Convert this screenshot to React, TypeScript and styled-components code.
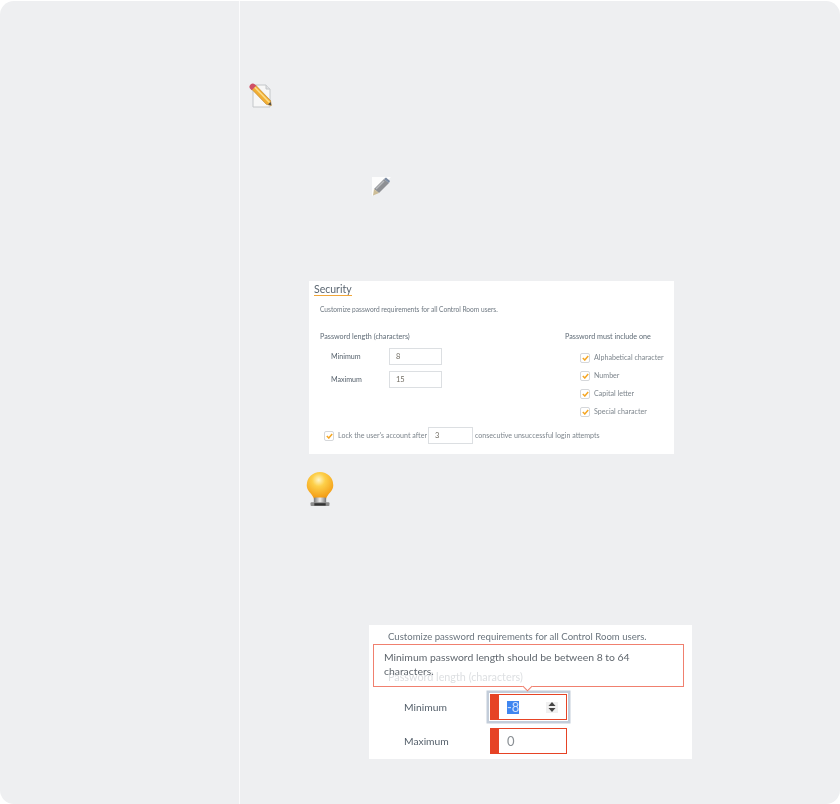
import React from "react";
import styled, { createGlobalStyle } from "styled-components";

const Global = createGlobalStyle`
  html, body { margin: 0; padding: 0; background: #fff; }
  body { font-family: Lato, "Liberation Sans", sans-serif; }
  #root { width: 840px; height: 804px; overflow: hidden; }
`;

const Panel = styled.div`
  width: 840px; height: 803px; margin-top: 1px; box-sizing: border-box;
  background: #eeeff1; border-radius: 14px; display: flex; overflow: hidden;
`;
const Sidebar = styled.aside`
  width: 239px; flex: none; border-right: 1px solid #fbfbfc;
`;
const Main = styled.main`
  flex: 1; display: flex; flex-direction: column; align-items: flex-start;
`;
const NoteIcon = styled.svg`
  width: 26px; height: 26px; margin: 81px 0 0 8px; flex: none; filter: blur(0.4px);
`;
const InlinePencil = styled.svg`
  width: 20px; height: 20px; margin: 69px 0 0 131px; flex: none; filter: blur(0.4px);
`;
const Card = styled.section`
  background: #fff; color: #5f6b76; box-sizing: border-box; flex: none; filter: blur(0.3px);
`;
const SecurityCard = styled(Card)`
  width: 365px; height: 173px; margin: 84px 0 0 69px; padding: 3px 5px 0;
  font-size: 7.1px; line-height: 10px;
`;
const Title = styled.h3`
  display: inline-block; margin: 0; font-size: 10.5px; font-weight: 400; line-height: 11px;
  padding-bottom: 0; border-bottom: 1px solid #f0a63a; color: #5a6570;
`;
const Intro = styled.p`
  margin: 8px 0 0 6px; color: #6d7780; font-size: 6.6px;
`;
const Columns = styled.div`
  display: flex; justify-content: space-between; margin: 18px 0 0 6px; height: 93px;
`;
const Column = styled.div`
  display: flex; flex-direction: column;
`;
const Heading = styled.div`
  font-size: 7.2px; color: #5f6b76; height: 12px;
`;
const Row = styled.div`
  display: grid; grid-template-columns: 58px 53px; align-items: center; padding-left: 11px;
  margin-top: ${(p: { $top: number }) => p.$top}px; color: #56616c;
`;
const SmallField = styled.div`
  height: 17px; box-sizing: border-box; border: 1px solid #dcdfe2; padding: 2px 0 0 6px;
  line-height: 11px; font-size: 7.5px; color: #6f6a60;
`;
const RuleColumn = styled(Column)`
  width: 104px;
`;
const Rule = styled.div`
  display: flex; align-items: center; gap: 4px; height: 18px; padding-left: 15px; color: #7e868d;
  white-space: nowrap;
`;
const RuleList = styled.div`
  display: flex; flex-direction: column; margin-top: 5px;
`;
const Box = styled.span`
  width: 10px; height: 10px; box-sizing: border-box; flex: none; border: 1px solid #d5d7da;
  border-radius: 2px; display: flex; align-items: center; justify-content: center;
`;
const LockRow = styled.div`
  display: flex; align-items: center; margin: 2px 0 0 10px; color: #7e868d;
`;
const LockText = styled.span`
  margin: 0 1px 0 4px;
`;
const LockTail = styled.span`
  margin-left: 2px;
`;
const LockField = styled(SmallField)`
  width: 45px; padding-left: 6px;
`;
const BulbIcon = styled.svg`
  width: 30px; height: 36px; margin: 17px 0 0 65px; flex: none; filter: blur(0.4px);
`;
const ErrorCard = styled(Card)`
  position: relative; width: 323px; height: 134px; margin: 118px 0 0 129px; padding: 6px 0 0 0;
  font-size: 10.6px; line-height: 12px; color: #6b757e;
`;
const ErrorIntro = styled.p`
  margin: 0 0 0 19px; font-size: 9.6px;
`;
const GhostLabel = styled.div`
  margin: 28px 0 0 19px; color: #a9afb5; font-size: 10.8px;
`;
const ErrorRows = styled.div`
  display: flex; flex-direction: column; gap: 8px; margin: 11px 0 0 35px;
`;
const ErrorRow = styled.div`
  display: grid; grid-template-columns: 86px 77px; align-items: center; color: #56616c; font-size: 10.3px;
`;
const BadField = styled.div`
  position: relative; height: 26px; box-sizing: border-box; border: 1px solid #e64325;
  border-left: 9px solid #e64325; padding-left: 8px; line-height: 24px; color: #8a8f94; font-size: 13px;
  display: flex; align-items: center; justify-content: space-between; padding-right: 8px;
  ${(p: { $focus?: boolean }) => p.$focus ? "box-shadow: 0 0 0 1px #fff, 0 0 0 3.5px #c3cdda;" : ""}
`;
const Selected = styled.span`
  background: #3f86f0; color: #cfe0fb; line-height: 13px; width: 12px; text-align: center;
`;
const Spinner = styled.span`
  width: 12px; height: 11px; background: #f0f0f0; display: flex; align-items: center; justify-content: center;
`;
const Tip = styled.div`
  position: absolute; left: 4px; top: 19px; width: 311px; height: 43px; box-sizing: border-box;
  background: rgba(255, 255, 255, 0.6); border: 1px solid #f0806f; padding: 5px 40px 0 10px;
  font-size: 10.4px; line-height: 14px; color: #5f666d;
  &::after {
    content: ""; position: absolute; left: 150px; bottom: -4px; width: 6px; height: 6px;
    background: #fff; border-right: 1px solid #f0806f; border-bottom: 1px solid #f0806f;
    transform: rotate(45deg);
  }
`;

const Tick = () => (
  <svg width="7" height="6" viewBox="0 0 7 6"><path d="M.8 3l2 2L6.2.9" fill="none" stroke="#f5a623" strokeWidth="1.5" /></svg>
);
const rules = ["Alphabetical character", "Number", "Capital letter", "Special character"];

export default function App() {
  return (
    <>
      <Global />
      <Panel>
        <Sidebar />
        <Main>
          <NoteIcon viewBox="0 0 26 26">
            <path d="M5 3h13l4 4v18H5z" fill="#f7f7f7" stroke="#c4c7ca" />
            <path d="M18 3v4h4" fill="#dfe1e3" stroke="#c4c7ca" />
            <path d="M3.5 7L7.5 3l15 15.5.8 5-5-1.2z" fill="#f2ae33" stroke="#b97f26" strokeWidth=".6" />
            <path d="M6.5 5l15 15.5" stroke="#fbdd8a" strokeWidth="1.6" />
            <path d="M2.5 7a3 3 0 0 1 4.5-4.5l1.2 1.2-4.5 4.5z" fill="#cf4f66" />
            <path d="M20 22.4l3.3.9-.8-3.4z" fill="#4b4b4b" />
          </NoteIcon>
          <InlinePencil viewBox="0 0 20 20">
            <path d="M1 19V0h19" fill="#fff" opacity=".85" />
            <path d="M3 12L13 2l5 4L8 16z" fill="#8e9094" />
            <path d="M13 2l2-1.5 4 3.5-1 2z" fill="#7b8aa0" />
            <path d="M3 12l5 4-6 2.5z" fill="#cdbd97" />
            <path d="M5 12l8-8" stroke="#b9bbbe" strokeWidth="1.5" />
          </InlinePencil>
          <SecurityCard>
            <Title>Security</Title>
            <Intro>Customize password requirements for all Control Room users.</Intro>
            <Columns>
              <Column>
                <Heading>Password length (characters)</Heading>
                <Row $top={4}><span>Minimum</span><SmallField>8</SmallField></Row>
                <Row $top={6}><span>Maximum</span><SmallField>15</SmallField></Row>
              </Column>
              <RuleColumn>
                <Heading>Password must include one</Heading>
                <RuleList>
                  {rules.map((r) => (
                    <Rule key={r}><Box><Tick /></Box>{r}</Rule>
                  ))}
                </RuleList>
              </RuleColumn>
            </Columns>
            <LockRow>
              <Box><Tick /></Box>
              <LockText>Lock the user's account after</LockText>
              <LockField>3</LockField>
              <LockTail>consecutive unsuccessful login attempts</LockTail>
            </LockRow>
          </SecurityCard>
          <BulbIcon viewBox="0 0 30 38">
            <defs>
              <radialGradient id="bulb" cx=".45" cy=".3" r=".7">
                <stop offset="0" stopColor="#fff6c8" />
                <stop offset=".35" stopColor="#fdd04a" />
                <stop offset="1" stopColor="#f39a12" />
              </radialGradient>
              <linearGradient id="base" x1="0" x2="1" y1="0" y2="0">
                <stop offset="0" stopColor="#777" />
                <stop offset=".5" stopColor="#eee" />
                <stop offset="1" stopColor="#777" />
              </linearGradient>
            </defs>
            <path d="M15 1a14 14 0 0 0-14 14c0 6 5 8 7.500 14h13C24 23 29 21 29 15A14 14 0 0 0 15 1z" fill="url(#bulb)" />
            <rect x="8.500" y="28" width="13" height="6" rx="1" fill="url(#base)" />
            <rect x="5" y="33" width="20" height="4" rx="1" fill="#8d8d8d" />
            <rect x="9" y="34" width="12" height="2.500" fill="#333" />
          </BulbIcon>
          <ErrorCard>
            <ErrorIntro>Customize password requirements for all Control Room users.</ErrorIntro>
            <GhostLabel>Password length (characters)</GhostLabel>
            <ErrorRows>
              <ErrorRow>
                <span>Minimum</span>
                <BadField $focus>
                  <Selected>-8</Selected>
                  <Spinner>
                    <svg width="8" height="10" viewBox="0 0 8 10"><path d="M4 0l3.500 4h-7zM4 10L.5 6h7z" fill="#444" /></svg>
                  </Spinner>
                </BadField>
              </ErrorRow>
              <ErrorRow>
                <span>Maximum</span>
                <BadField>0</BadField>
              </ErrorRow>
            </ErrorRows>
            <Tip>Minimum password length should be between 8 to 64 characters.</Tip>
          </ErrorCard>
        </Main>
      </Panel>
    </>
  );
}
